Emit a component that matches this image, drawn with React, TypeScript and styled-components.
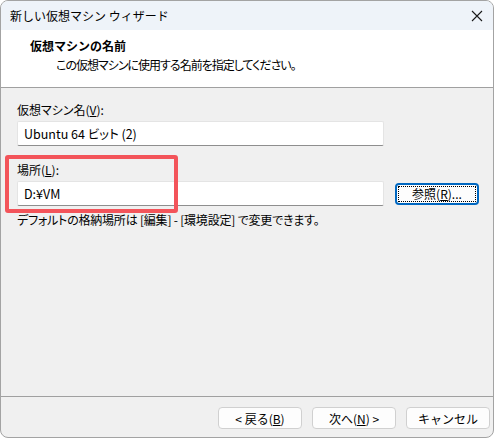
import React from 'react';
import styled, { createGlobalStyle } from 'styled-components';

const GlobalStyle = createGlobalStyle`
  html, body {
    margin: 0;
    padding: 0;
    background: #ffffff;
  }
  body {
    font-family: "Noto Sans CJK JP", "Noto Sans", sans-serif;
    font-size: 12px;
    color: #000;
  }
`;

const Window = styled.div`
  box-sizing: border-box;
  width: 494px;
  height: 438px;
  display: flex;
  flex-direction: column;
  background: #f0f0f0;
  border: 1px solid #a3a3a3;
  border-radius: 8px;
  overflow: hidden;
  position: relative;
`;

const TitleBar = styled.div`
  height: 29px;
  flex: none;
  display: flex;
  align-items: center;
  justify-content: space-between;
  padding: 0 9px 0 9px;
  background: #eef3f9;
`;

const TitleText = styled.span`
  font-size: 12px;
  line-height: 16px;
`;

const CloseIcon = () => (
  <svg width="12" height="12" viewBox="0 0 12 12" style={{ marginRight: 1 }}>
    <path d="M1 1 L11 11 M11 1 L1 11" stroke="#1a1a1a" strokeWidth="1.1" />
  </svg>
);

const Header = styled.div`
  height: 58px;
  flex: none;
  box-sizing: border-box;
  background: #ffffff;
  border-bottom: 1px solid #a0a0a0;
  padding: 8px 0 0 29px;
  display: flex;
  flex-direction: column;
  gap: 3px;
`;

const HeaderTitle = styled.div`
  font-weight: bold;
  font-size: 12px;
  line-height: 16px;
`;

const HeaderSub = styled.div`
  font-size: 12px;
  line-height: 16px;
  padding-left: 26px;
  font-feature-settings: "palt";
  letter-spacing: -1px;
`;

const Body = styled.div`
  flex: 1;
  display: flex;
  flex-direction: column;
  padding: 14px 0 0 16px;
  font-feature-settings: "palt";
`;

const Label = styled.div<{ $gap?: number }>`
  font-size: 12px;
  line-height: 16px;
  margin-top: ${({ $gap }) => $gap ?? 0}px;
`;

const Row = styled.div`
  display: flex;
  align-items: center;
  gap: 11px;
  margin-top: 3px;
`;

const TextBox = styled.div`
  box-sizing: border-box;
  width: 367px;
  height: 25px;
  background: #ffffff;
  border: 1px solid #e4e4e4;
  border-bottom: 1px solid #8e8e8e;
  border-radius: 2px;
  padding: 0 6px;
  display: flex;
  align-items: center;
  font-size: 12.5px;
`;

const Button = styled.div<{ $focused?: boolean }>`
  box-sizing: border-box;
  width: 84px;
  height: 22px;
  background: #fdfdfd;
  border: ${({ $focused }) => ($focused ? '2px solid #0067c0' : '1px solid #d0d0d0')};
  border-radius: 4px;
  display: flex;
  align-items: center;
  justify-content: center;
  font-size: 12px;
  position: relative;
  &::after {
    content: '';
    display: ${({ $focused }) => ($focused ? 'block' : 'none')};
    position: absolute;
    inset: 1px;
    border: 1px dotted #000;
  }
`;

const Hint = styled.div`
  font-size: 12px;
  line-height: 16px;
  margin-top: 6px;
  letter-spacing: -0.2px;
`;

const Mark = styled.span`
  position: absolute;
  left: 4px;
  top: 154px;
  width: 173px;
  height: 58px;
  box-sizing: border-box;
  border: 4px solid #f3545a;
  border-radius: 3px;
`;

const Footer = styled.div`
  flex: none;
  height: 41px;
  box-sizing: border-box;
  border-top: 1px solid #a0a0a0;
  display: flex;
  justify-content: flex-end;
  align-items: flex-start;
  gap: 10px;
  padding: 10px 3px 0 0;
`;

const U = styled.span`
  text-decoration: underline;
`;

export default function App() {
  return (
    <>
      <GlobalStyle />
      <Window>
        <TitleBar>
          <TitleText>新しい仮想マシン ウィザード</TitleText>
          <CloseIcon />
        </TitleBar>
        <Header>
          <HeaderTitle>仮想マシンの名前</HeaderTitle>
          <HeaderSub>この仮想マシンに使用する名前を指定してください。</HeaderSub>
        </Header>
        <Body>
          <Label>
            仮想マシン名(<U>V</U>):
          </Label>
          <Row>
            <TextBox>Ubuntu 64 ビット (2)</TextBox>
          </Row>
          <Label $gap={16}>
            場所(<U>L</U>):
          </Label>
          <Row>
            <TextBox>D:¥VM</TextBox>
            <Button $focused>
              参照(<U>R</U>)...
            </Button>
          </Row>
          <Hint>デフォルトの格納場所は [編集] - [環境設定] で変更できます。</Hint>
        </Body>
        <Footer>
          <Button>
            &lt; 戻る(<U>B</U>)
          </Button>
          <Button>
            次へ(<U>N</U>) &gt;
          </Button>
          <Button>キャンセル</Button>
        </Footer>
        <Mark />
      </Window>
    </>
  );
}
